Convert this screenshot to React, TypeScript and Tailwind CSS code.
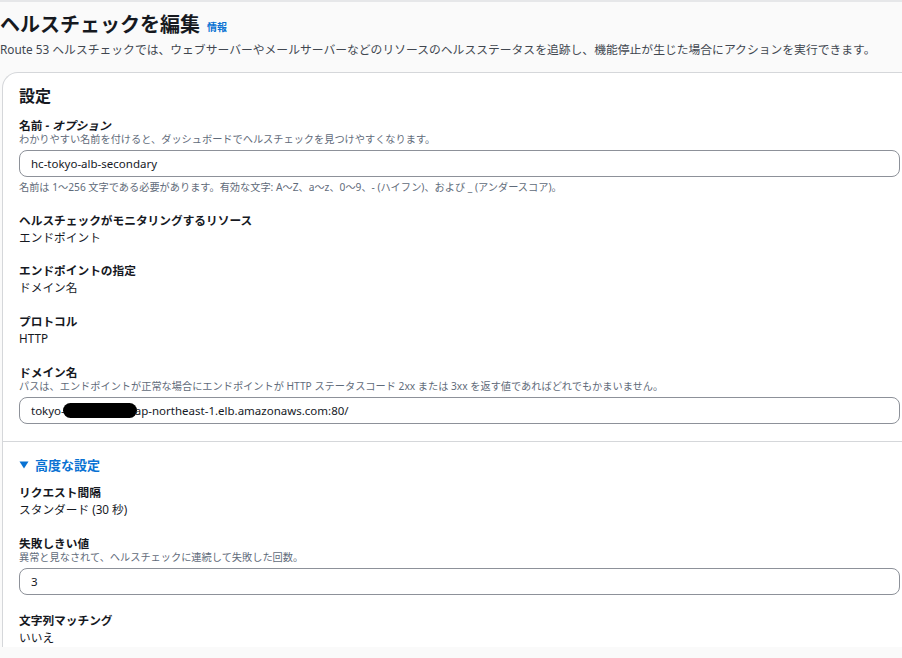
import React from "react";

const font = { fontFamily: '"Noto Sans", "Noto Sans CJK JP", sans-serif' };

function Label({ children }: { children: React.ReactNode }) {
  return (
    <p className="text-[11.7px] leading-[16px] font-bold text-[#16191f]">
      {children}
    </p>
  );
}

function Value({ children }: { children: React.ReactNode }) {
  return (
    <p className="text-[11.7px] leading-[18px] text-[#16191f]">{children}</p>
  );
}

function Hint({ children }: { children: React.ReactNode }) {
  return (
    <p className="text-[10.2px] leading-[12px] text-[#5f6b7a]">{children}</p>
  );
}

function Input({ children }: { children: React.ReactNode }) {
  return (
    <div className="mt-[5px] h-[27px] w-full rounded-[8px] border border-[#8d9199] bg-white px-[11px] flex items-center text-[11.5px] text-[#16191f]">
      {children}
    </div>
  );
}

export default function App() {
  return (
    <div
      className="min-h-screen w-[902px] overflow-hidden bg-[#fafafa] border-t-2 border-[#e6e7e9]"
      style={font}
    >
      {/* HEADER */}
      <div className="pt-[11px]">
        <div className="flex items-end gap-[7px]">
          <h1 className="text-[20px] leading-[24px] font-bold text-[#16191f]">
            ヘルスチェックを編集
          </h1>
          <a className="text-[10px] leading-[20px] font-bold text-[#0972d3]">
            情報
          </a>
        </div>
        <p className="mt-1 text-[11.8px] leading-[16px] text-[#414750]">
          Route 53 ヘルスチェックでは、ウェブサーバーやメールサーバーなどのリソースのヘルスステータスを追跡し、機能停止が生じた場合にアクションを実行できます。
        </p>
      </div>

      {/* CARD */}
      <div className="mt-[15px] ml-[2px] bg-white border-l border-t border-[#d5d7da] rounded-tl-[16px]">
        {/* SETTINGS */}
        <div className="pl-4 pr-[2px] pt-[12px] pb-[17px] border-b border-[#d5d7da]">
          <h2 className="text-[16px] leading-[22px] font-bold text-[#16191f]">
            設定
          </h2>

          <div className="mt-[10px]">
            <Label>
              名前 <span className="italic">- オプション</span>
            </Label>
            <Hint>わかりやすい名前を付けると、ダッシュボードでヘルスチェックを見つけやすくなります。</Hint>
            <Input>hc-tokyo-alb-secondary</Input>
            <p className="mt-[3px] text-[10.2px] leading-[14px] text-[#5f6b7a]">
              名前は 1～256 文字である必要があります。有効な文字: A～Z、a～z、0～9、- (ハイフン)、および _ (アンダースコア)。
            </p>
          </div>

          <div className="mt-[18px]">
            <Label>ヘルスチェックがモニタリングするリソース</Label>
            <Value>エンドポイント</Value>
          </div>

          <div className="mt-[16px]">
            <Label>エンドポイントの指定</Label>
            <Value>ドメイン名</Value>
          </div>

          <div className="mt-[17px]">
            <Label>プロトコル</Label>
            <Value>HTTP</Value>
          </div>

          <div className="mt-[17px]">
            <Label>ドメイン名</Label>
            <Hint>パスは、エンドポイントが正常な場合にエンドポイントが HTTP ステータスコード 2xx または 3xx を返す値であればどれでもかまいません。</Hint>
            <Input>
              tokyo-
              <span className="inline-block h-[15px] w-[74px] -ml-[2px] -mr-[2px] rounded-full bg-black" />
              ap-northeast-1.elb.amazonaws.com:80/
            </Input>
          </div>
        </div>

        {/* ADVANCED */}
        <div className="pl-4 pr-[2px] pt-[14px] pb-[1px]">
          <button className="flex items-center gap-[6px] text-[13px] leading-[18px] font-bold text-[#0972d3]">
            <svg width="10" height="8" viewBox="0 0 10 8">
              <path d="M0.5 0.5 H9.5 L5 7.5 Z" fill="#0972d3" />
            </svg>
            高度な設定
          </button>

          <div className="mt-[10px]">
            <Label>リクエスト間隔</Label>
            <Value>スタンダード (30 秒)</Value>
          </div>

          <div className="mt-[17px]">
            <Label>失敗しきい値</Label>
            <Hint>異常と見なされて、ヘルスチェックに連続して失敗した回数。</Hint>
            <Input>3</Input>
          </div>

          <div className="mt-[17px]">
            <Label>文字列マッチング</Label>
            <Value>いいえ</Value>
          </div>
        </div>
      </div>
    </div>
  );
}
